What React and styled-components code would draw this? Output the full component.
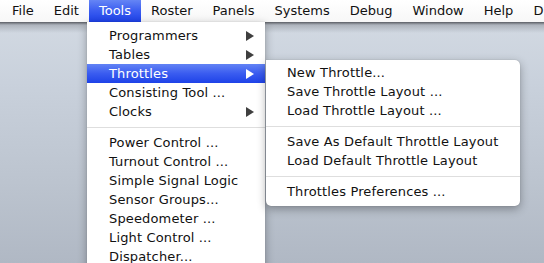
import React from "react";
import styled, { createGlobalStyle } from "styled-components";

const GlobalStyle = createGlobalStyle`
  html, body {
    margin: 0;
    padding: 0;
  }
  body {
    font-family: "DejaVu Sans", "Liberation Sans", sans-serif;
    font-size: 13px;
    color: #111;
  }
`;

const Screen = styled.div`
  position: relative;
  width: 544px;
  height: 263px;
  overflow: hidden;
  display: flex;
  flex-direction: column;
`;

const MenuBar = styled.div`
  height: 22px;
  display: flex;
  align-items: stretch;
  padding-left: 2px;
  background: linear-gradient(to bottom, #ffffff 0%, #f7f7f7 100%);
  white-space: nowrap;
  z-index: 2;
`;

const BarItem = styled.div`
  display: flex;
  align-items: center;
  padding: 0 10px;
  line-height: 22px;
  color: ${(p) => (p.active ? "#fff" : "#111")};
  background: ${(p) =>
    p.active ? "linear-gradient(to bottom, #6585f5 0%, #3a5cf0 50%, #1d41e8 100%)" : "transparent"};
`;

const Desktop = styled.div`
  flex: 1;
  background:
    linear-gradient(to bottom, rgba(60, 62, 68, 0.8) 0px, rgba(120, 124, 132, 0.4) 3px, rgba(255, 255, 255, 0) 11px),
    linear-gradient(to bottom, #d2d9e2 0px, #c9d1dc 60px, #bcc4cf 160px, #b0b8c4 241px);
`;

const Menu = styled.div`
  position: absolute;
  top: ${(p) => p.top}px;
  left: ${(p) => p.left}px;
  width: ${(p) => p.width}px;
  padding: ${(p) => p.pad};
  background: #ffffff;
  border-radius: ${(p) => p.radius};
  box-shadow: 0 3px 10px rgba(0, 0, 0, 0.32), 0 0 1px rgba(0, 0, 0, 0.3);
  z-index: ${(p) => p.z};
`;

const Row = styled.div`
  height: 19px;
  line-height: 19px;
  display: flex;
  align-items: center;
  justify-content: space-between;
  padding: 0 11px 0 ${(p) => p.indent}px;
  white-space: nowrap;
  letter-spacing: 0.15px;
  color: ${(p) => (p.active ? "#fff" : "#111")};
  background: ${(p) =>
    p.active ? "linear-gradient(to bottom, #6283f5 0%, #3a5cf0 50%, #1e42e8 100%)" : "transparent"};
`;

const Arrow = styled.span`
  width: 0;
  height: 0;
  border-top: 5px solid transparent;
  border-bottom: 5px solid transparent;
  border-left: 8px solid ${(p) => (p.active ? "#fff" : "#3f3f3f")};
`;

const Separator = styled.div`
  height: 12px;
  display: flex;
  align-items: center;
  &::after {
    content: "";
    flex: 1;
    height: 1px;
    background: #dedede;
  }
`;

const barItems = ["File", "Edit", "Tools", "Roster", "Panels", "Systems", "Debug", "Window", "Help", "Dispatcher"];

const toolsItems = [
  { label: "Programmers", sub: true },
  { label: "Tables", sub: true },
  { label: "Throttles", sub: true, active: true },
  { label: "Consisting Tool ..." },
  { label: "Clocks", sub: true },
  { sep: true },
  { label: "Power Control ..." },
  { label: "Turnout Control ..." },
  { label: "Simple Signal Logic" },
  { label: "Sensor Groups..." },
  { label: "Speedometer ..." },
  { label: "Light Control ..." },
  { label: "Dispatcher..." },
];

const throttleItems = [
  { label: "New Throttle..." },
  { label: "Save Throttle Layout ..." },
  { label: "Load Throttle Layout ..." },
  { sep: true },
  { label: "Save As Default Throttle Layout" },
  { label: "Load Default Throttle Layout" },
  { sep: true },
  { label: "Throttles Preferences ..." },
];

const renderItems = (items, indent) =>
  items.map((it, i) =>
    it.sep ? (
      <Separator key={i} />
    ) : (
      <Row key={i} indent={indent} active={it.active}>
        <span>{it.label}</span>
        {it.sub && <Arrow active={it.active} />}
      </Row>
    )
  );

export default function App() {
  return (
    <>
      <GlobalStyle />
      <Screen>
        <MenuBar>
          {barItems.map((b) => (
            <BarItem key={b} active={b === "Tools"}>
              {b}
            </BarItem>
          ))}
        </MenuBar>
        <Desktop />
        <Menu top={22} left={87} width={178} pad="4px 0 6px" radius="0 0 5px 5px" z={3}>
          {renderItems(toolsItems, 22)}
        </Menu>
        <Menu top={60} left={266} width={254} pad="3px 0 5px" radius="0 5px 5px 5px" z={4}>
          {renderItems(throttleItems, 21)}
        </Menu>
      </Screen>
    </>
  );
}
